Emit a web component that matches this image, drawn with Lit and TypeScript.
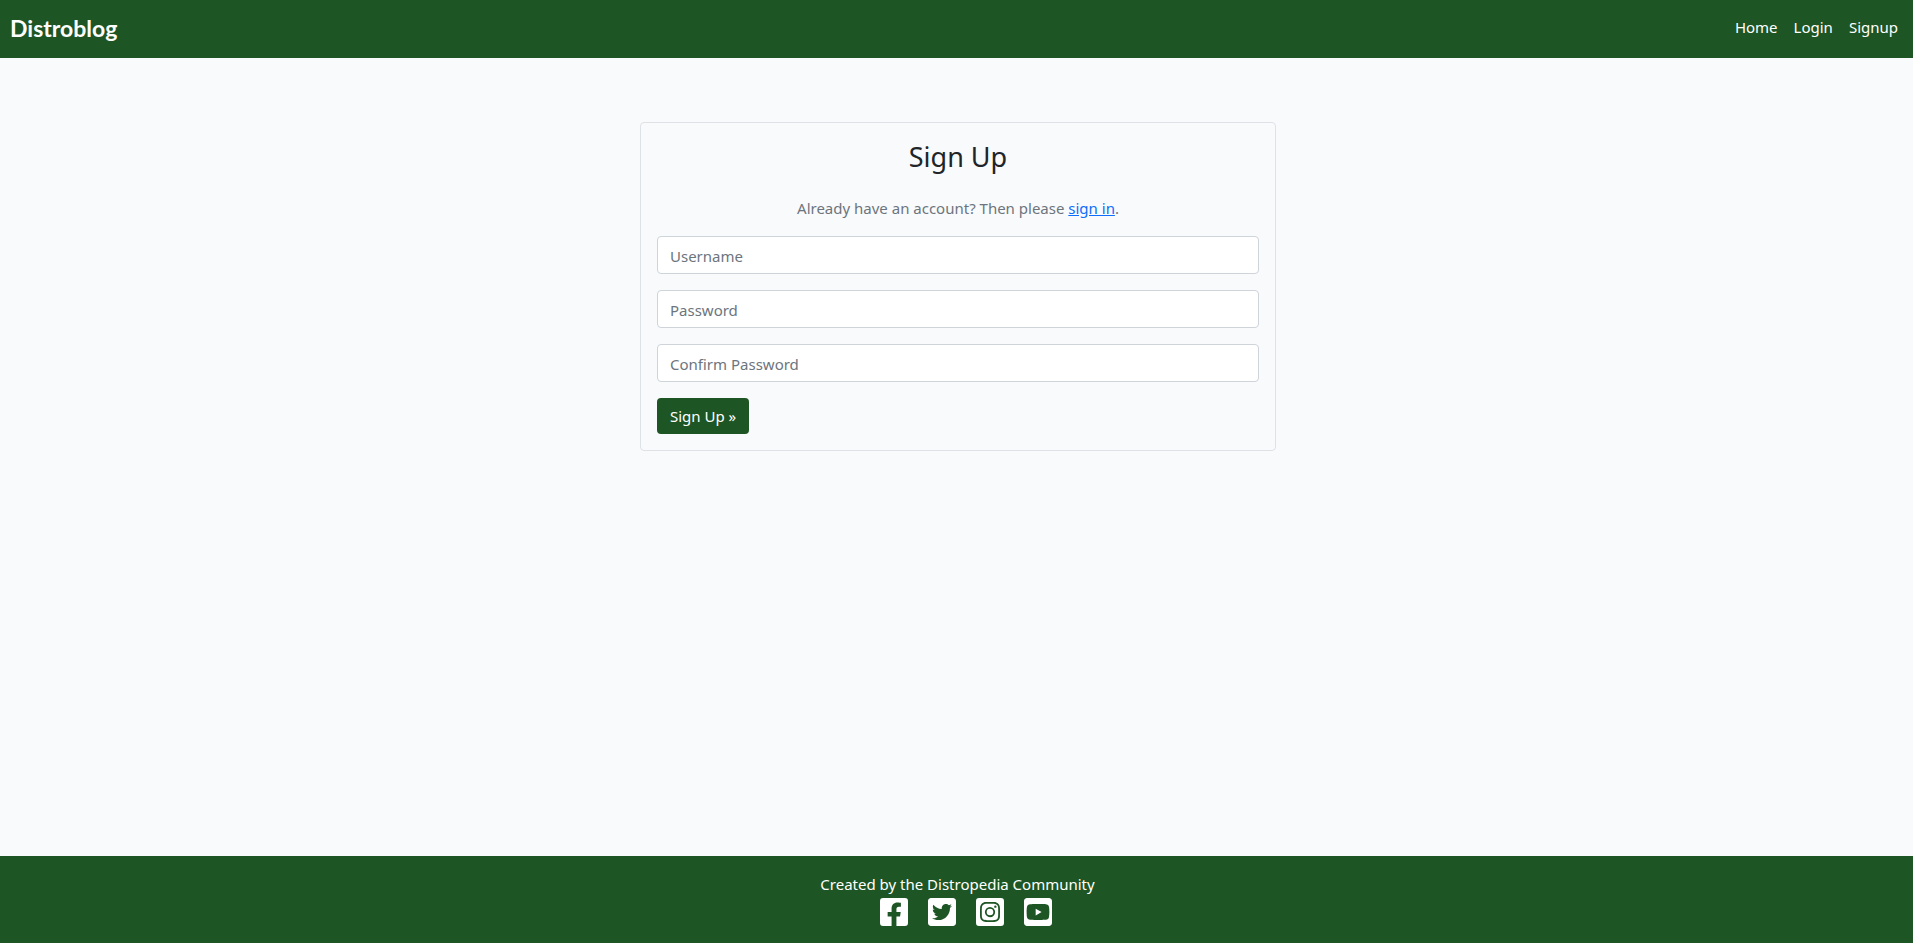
import { LitElement, html, css, svg } from "lit";
import { customElement } from "lit/decorators.js";

const navLinks = ["Home", "Login", "Signup"];

const fields = [
  { id: "username", label: "Username", type: "text" },
  { id: "password", label: "Password", type: "password" },
  { id: "confirm-password", label: "Confirm Password", type: "password" },
];

const socials = [
  {
    name: "Facebook",
    path: svg`<path d="M400 32H48A48 48 0 0 0 0 80v352a48 48 0 0 0 48 48h137.25V327.69h-63V256h63v-54.64c0-62.15 37-96.48 93.67-96.48 27.14 0 55.52 4.84 55.52 4.84v61h-31.27c-30.81 0-40.42 19.12-40.42 38.73V256h68.78l-11 71.69h-57.78V480H400a48 48 0 0 0 48-48V80a48 48 0 0 0-48-48z"/>`,
  },
  {
    name: "Twitter",
    path: svg`<path d="M400 32H48C21.5 32 0 53.5 0 80v352c0 26.5 21.5 48 48 48h352c26.5 0 48-21.5 48-48V80c0-26.5-21.5-48-48-48zm-48.9 158.8c.2 2.8.2 5.7.2 8.5 0 86.7-66 186.6-186.6 186.6-37.2 0-71.7-10.8-100.7-29.4 5.3.6 10.4.8 15.8.8 30.7 0 58.9-10.4 81.4-28-28.8-.6-53-19.5-61.3-45.5 10.1 1.5 19.2 1.5 29.6-1.2-30-6.1-52.5-32.5-52.5-64.4v-.8c8.7 4.9 18.9 7.9 29.6 8.3a65.447 65.447 0 0 1-29.2-54.6c0-12.2 3.2-23.4 8.9-33.1 32.3 39.8 80.8 65.8 135.2 68.6-9.3-44.5 24-80.6 64-80.6 18.9 0 35.9 7.9 47.9 20.7 14.8-2.8 29-8.3 41.6-15.8-4.9 15.2-15.2 28-28.8 36.1 13.2-1.4 26-5.1 37.8-10.2-8.9 13.1-20.1 24.7-32.9 34z"/>`,
  },
  {
    name: "Instagram",
    path: svg`<path d="M224,202.66A53.34,53.34,0,1,0,277.36,256,53.38,53.38,0,0,0,224,202.66Zm124.71-41a54,54,0,0,0-30.41-30.41c-21-8.29-71-6.43-94.3-6.43s-73.25-1.93-94.31,6.43a54,54,0,0,0-30.41,30.41c-8.28,21-6.43,71.05-6.43,94.33S91,329.26,99.32,350.33a54,54,0,0,0,30.41,30.41c21,8.29,71,6.43,94.31,6.43s73.24,1.93,94.3-6.43a54,54,0,0,0,30.41-30.41c8.35-21,6.43-71.05,6.43-94.33S357.1,182.74,348.75,161.67ZM224,338a82,82,0,1,1,82-82A81.9,81.9,0,0,1,224,338Zm85.38-148.3a19.14,19.14,0,1,1,19.13-19.14A19.1,19.1,0,0,1,309.42,189.74ZM400,32H48A48,48,0,0,0,0,80V432a48,48,0,0,0,48,48H400a48,48,0,0,0,48-48V80A48,48,0,0,0,400,32ZM382.88,322c-1.29,25.63-7.14,48.34-25.85,67s-41.4,24.63-67,25.85c-26.41,1.49-105.59,1.49-132,0-25.63-1.29-48.26-7.15-67-25.85s-24.63-41.42-25.85-67c-1.49-26.42-1.49-105.61,0-132,1.29-25.63,7.07-48.34,25.85-67s41.47-24.56,67-25.78c26.41-1.49,105.59-1.49,132,0,25.63,1.29,48.33,7.15,67,25.85s24.63,41.42,25.85,67.05C384.37,216.44,384.37,295.56,382.88,322Z"/>`,
  },
  {
    name: "YouTube",
    path: svg`<path d="M186.8 202.1l95.2 54.1-95.2 54.1V202.1zM448 80v352c0 26.5-21.5 48-48 48H48c-26.5 0-48-21.5-48-48V80c0-26.5 21.5-48 48-48h352c26.5 0 48 21.5 48 48zm-42 176.3s0-59.6-7.6-88.2c-4.2-15.8-16.5-28.2-32.2-32.4C337.9 128 224 128 224 128s-113.9 0-142.2 7.7c-15.7 4.2-28 16.6-32.2 32.4-7.6 28.5-7.6 88.2-7.6 88.2s0 59.6 7.6 88.2c4.2 15.8 16.5 27.7 32.2 31.9C110.1 384 224 384 224 384s113.9 0 142.2-7.7c15.7-4.2 28-16.1 32.2-31.9 7.6-28.5 7.6-88.1 7.6-88.1z"/>`,
  },
];

@customElement("site-header")
class SiteHeader extends LitElement {
  static styles = css`
    :host {
      display: block;
      background: #1d5524;
    }
    .bar {
      display: flex;
      justify-content: space-between;
      align-items: flex-start;
      padding: 8px 15px 10px 10px;
    }
    .brand {
      color: #fff;
      font: 700 23px/40px Lato, sans-serif;
      text-decoration: none;
    }
    .links {
      display: flex;
      gap: 16px;
      line-height: 38px;
    }
    .link {
      color: #fff;
      text-decoration: none;
    }
  `;

  render() {
    return html`
      <header class="bar">
        <a class="brand" href="#">Distroblog</a>
        <nav class="links">
          ${navLinks.map((name) => html`<a class="link" href="#">${name}</a>`)}
        </nav>
      </header>
    `;
  }
}

@customElement("signup-card")
class SignupCard extends LitElement {
  static styles = css`
    :host {
      display: block;
    }
    .card {
      display: flex;
      flex-direction: column;
      gap: 16px;
      padding: 16px;
      border: 1px solid #dee2e6;
      border-radius: 4px;
    }
    .title {
      margin: 0;
      color: #212529;
      font-size: 27px;
      font-weight: 400;
      line-height: 35px;
      text-align: center;
    }
    .hint {
      margin: 0;
      padding-top: 6px;
      color: #6c757d;
      text-align: center;
    }
    .signin {
      color: #0d6efd;
    }
    .input {
      display: block;
      box-sizing: border-box;
      width: 100%;
      height: 38px;
      padding: 7px 12px 5px;
      border: 1px solid #ced4da;
      border-radius: 4px;
      background: #fff;
      color: #212529;
      font: inherit;
    }
    .input::placeholder {
      color: #6c757d;
      opacity: 1;
    }
    .submit {
      align-self: flex-start;
      padding: 6px 13px;
      border: 0;
      border-radius: 4px;
      background: #1d5524;
      color: #fff;
      font: inherit;
    }
  `;

  render() {
    return html`
      <form class="card">
        <h1 class="title">Sign Up</h1>
        <p class="hint">
          Already have an account? Then please <a class="signin" href="#">sign in</a>.
        </p>
        ${fields.map(
          (f) => html`
            <input
              class="input"
              id=${f.id}
              name=${f.id}
              type=${f.type}
              placeholder=${f.label}
              aria-label=${f.label}
            />
          `
        )}
        <button class="submit" type="button">Sign Up »</button>
      </form>
    `;
  }
}

@customElement("site-footer")
class SiteFooter extends LitElement {
  static styles = css`
    :host {
      display: block;
      background: #1d5524;
      color: #fff;
    }
    .footer {
      display: flex;
      flex-direction: column;
      align-items: center;
      gap: 2px;
      padding: 16px 0 17px 2px;
    }
    .credit {
      margin: 0;
    }
    .socials {
      display: flex;
      gap: 20px;
      padding-left: 16px;
    }
    .social {
      display: block;
      color: #fff;
    }
    .icon {
      display: block;
      width: 28px;
      height: 28px;
      fill: currentColor;
    }
  `;

  render() {
    return html`
      <footer class="footer">
        <p class="credit">Created by the Distropedia Community</p>
        <div class="socials">
          ${socials.map(
            (s) => html`
              <a class="social" href="#" aria-label=${s.name}>
                <svg class="icon" viewBox="0 32 448 448" aria-hidden="true">${s.path}</svg>
              </a>
            `
          )}
        </div>
      </footer>
    `;
  }
}

@customElement("app-root")
class AppRoot extends LitElement {
  static styles = css`
    :host {
      display: flex;
      flex-direction: column;
      min-height: 100vh;
      background: #f9fafc;
      font: 15px/24px "Segoe UI", "Noto Sans", sans-serif;
    }
    .main {
      flex: 1;
      display: grid;
      grid-template-columns: minmax(auto, 636px);
      justify-content: center;
      align-content: start;
      padding: 64px 14px 64px 17px;
    }
  `;

  render() {
    return html`
      <site-header></site-header>
      <main class="main"><signup-card></signup-card></main>
      <site-footer></site-footer>
    `;
  }
}
